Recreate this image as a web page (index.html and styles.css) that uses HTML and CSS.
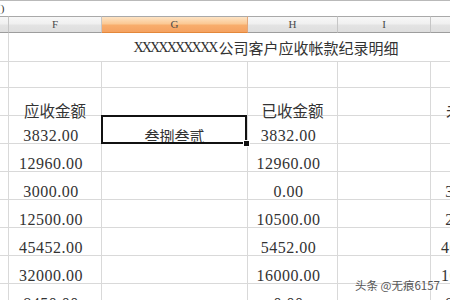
FILE: index.html
```html
<!DOCTYPE html>
<html lang="zh">
<head>
<meta charset="utf-8">
<link rel="stylesheet" href="styles.css">
</head>
<body>
<div class="screen">
  <div class="fbar"><span class="ftext">()</span></div>
  <div class="sheet">
    <div class="hd">&nbsp;</div>
    <div class="hd">F</div>
    <div class="hd hd-sel">G</div>
    <div class="hd">H</div>
    <div class="hd">I</div>
    <div class="hd">J</div>

    <div class="c"></div>
    <div class="c title"><span class="xs">XXXXXXXXXX</span><span class="cn">公司客户应收帐款纪录明细</span></div>

    <div class="c"></div><div class="c"></div><div class="c"></div><div class="c"></div><div class="c"></div><div class="c"></div>

    <div class="c"></div><div class="c lab">应收金额</div><div class="c"></div><div class="c lab">已收金额</div><div class="c"></div><div class="c lab">未收金额</div>

    <div class="c"></div><div class="c num">3832.00</div><div class="c sel"><span class="big">叁捌叁贰</span></div><div class="c num">3832.00</div><div class="c"></div><div class="c num">0.00</div>

    <div class="c"></div><div class="c num">12960.00</div><div class="c"></div><div class="c num">12960.00</div><div class="c"></div><div class="c num">0.00</div>

    <div class="c"></div><div class="c num">3000.00</div><div class="c"></div><div class="c num">0.00</div><div class="c"></div><div class="c num">3000.00</div>

    <div class="c"></div><div class="c num">12500.00</div><div class="c"></div><div class="c num">10500.00</div><div class="c"></div><div class="c num">2000.00</div>

    <div class="c"></div><div class="c num">45452.00</div><div class="c"></div><div class="c num">5452.00</div><div class="c"></div><div class="c num">40000.00</div>

    <div class="c"></div><div class="c num">32000.00</div><div class="c"></div><div class="c num">16000.00</div><div class="c"></div><div class="c num">16000.00</div>

    <div class="c"></div><div class="c num">8450.00</div><div class="c"></div><div class="c num">0.00</div><div class="c"></div><div class="c num">8450.00</div>
  </div>
  <div class="mark">头条 @无痕6157</div>
</div>
</body>
</html>
```

FILE: styles.css
```css
* { box-sizing: border-box; }
html, body { margin: 0; padding: 0; background: #fff; }
body { width: 450px; height: 300px; overflow: hidden; }

.screen { position: relative; width: 450px; height: 300px; overflow: hidden; }

.fbar {
  height: 16px;
  border-top: 1px solid #b9b9b9;
  background: #fff;
  overflow: hidden;
  font: 11px/14px "Liberation Serif", serif;
  color: #333;
}
.ftext { display: inline-block; margin-left: -3px; }

.sheet {
  display: grid;
  grid-template-columns: 9px 93px 146px 90px 93px 93px;
  grid-template-rows: 17px 29px 26px repeat(8, 28px);
  width: 524px;
}

.hd {
  border-top: 1px solid #a9a9a9;
  border-bottom: 1px solid #9d9d9d;
  border-right: 1px solid #c6c6c6;
  background: linear-gradient(#f7f7f7 0%, #f0f0f0 45%, #e3e3e3 55%, #dedede 100%);
  font: 11px/14px "Liberation Serif", serif;
  color: #4a4a4a;
  text-align: center;
  overflow: hidden;
}
.hd-sel {
  background: linear-gradient(#fde3c4 0%, #fbc994 45%, #f8ad6c 55%, #f5a261 100%);
  border-bottom-color: #e3873a;
  border-right-color: #e3a77a;
}

.c {
  border-right: 1px solid #d9d9d9;
  border-bottom: 1px solid #d9d9d9;
  display: flex;
  align-items: flex-end;
  justify-content: center;
  white-space: nowrap;
  color: #2e2e2e;
  min-width: 0;
}

.title {
  grid-column: 2 / 7;
  padding-bottom: 5px;
}
.xs {
  font: 14px/16px "Liberation Serif", serif;
  letter-spacing: -1.8px;
  margin-right: 2px;
}
.cn {
  font: 15px/16px "Noto Sans CJK SC", sans-serif;
  color: #333;
}

.lab {
  font: 15.5px/10px "Noto Sans CJK SC", sans-serif;
  padding-bottom: 0;
  color: #333;
}

.num {
  font: 16px/14px "Liberation Serif", serif;
  letter-spacing: 0.5px;
  padding-right: 8px;
  padding-bottom: 0;
  color: #333;
}

.sel { position: relative; padding-bottom: 1px; }
.big {
  font: 15px/12px "Noto Sans CJK SC", sans-serif;
  color: #333;
  text-decoration: underline;
  text-decoration-thickness: 1px;
  text-underline-offset: 1px;
}
.sel::after {
  content: "";
  position: absolute;
  left: -1px; top: -1px; right: 0; bottom: -1px;
  border: 2px solid #111;
}
.sel::before {
  content: "";
  position: absolute;
  right: -3px; bottom: -4px;
  width: 5px; height: 5px;
  background: #111;
  border: 1px solid #fff;
  z-index: 2;
}

.mark {
  position: absolute;
  left: 355px;
  top: 277px;
  font: 11.5px/16px "Noto Sans CJK SC", sans-serif;
  color: #555;
  text-shadow: 0 0 2px rgba(255,255,255,0.9);
}
```
